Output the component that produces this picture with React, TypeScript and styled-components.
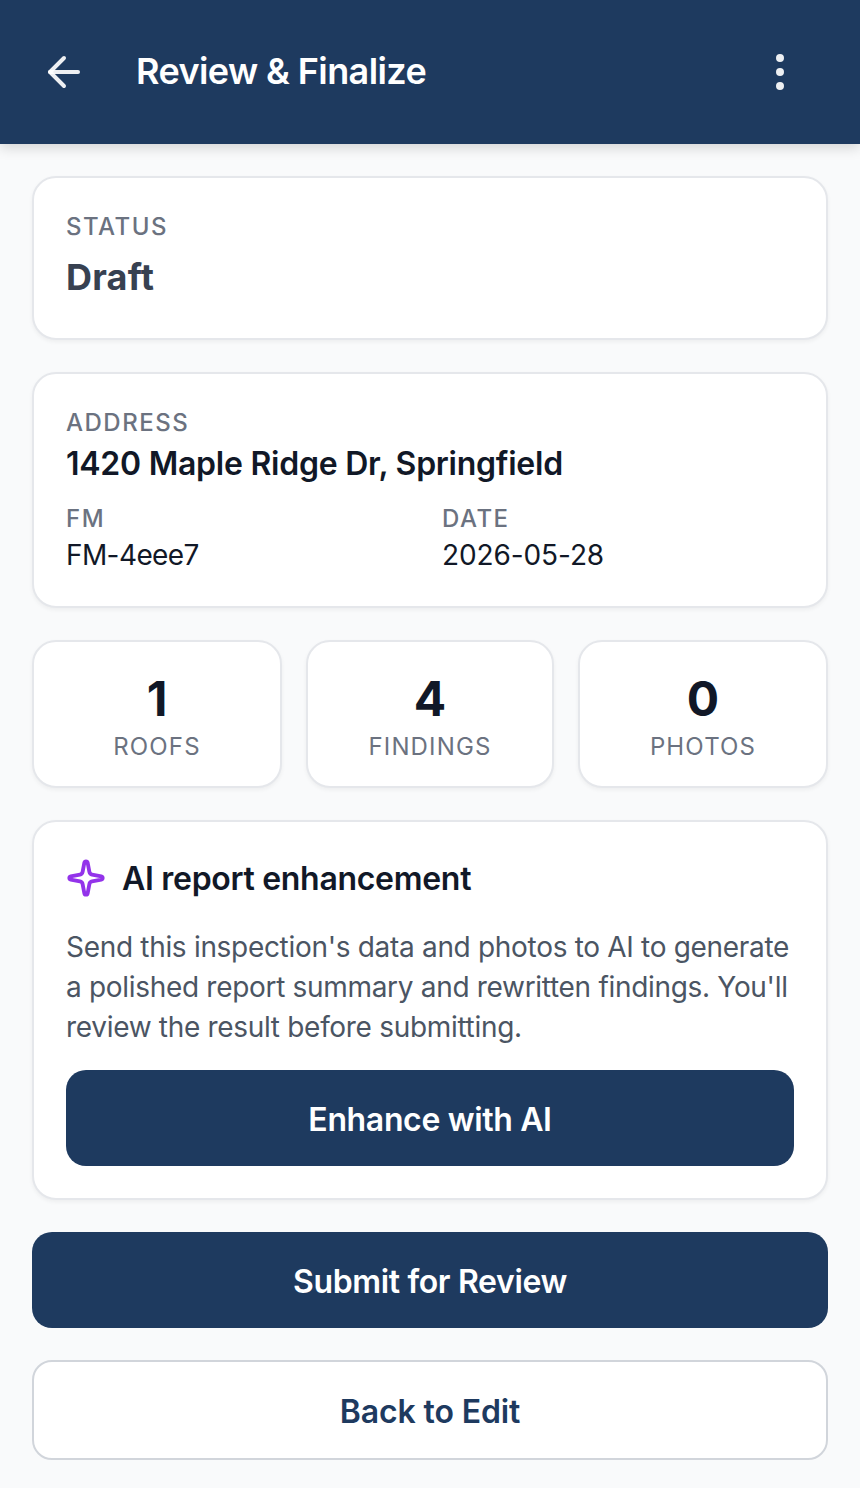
import React from "react";
import styled, { createGlobalStyle } from "styled-components";
import { ArrowLeft, EllipsisVertical, Sparkle } from "lucide-react";

const Global = createGlobalStyle`
  html, body { margin: 0; padding: 0; background: #f9fafb; }
  * { box-sizing: border-box; }
  body { font-family: Inter, "Liberation Sans", sans-serif; }
`;

const Page = styled.div`
  width: 860px;
  height: 1488px;
  overflow: hidden;
  background: #f9fafb;
  display: flex;
  flex-direction: column;
`;

const Header = styled.header`
  height: 144px;
  flex: none;
  background: #1e3a5f;
  color: #fff;
  display: flex;
  align-items: center;
  padding: 0 56px 0 40px;
  gap: 48px;
  box-shadow: 0 4px 12px rgba(0, 0, 0, 0.15);
  position: relative;
  z-index: 1;
`;

const IconButton = styled.span`
  display: flex;
  width: 48px;
  height: 48px;
  flex: none;
  color: rgba(255, 255, 255, 0.92);
`;

const Title = styled.h1`
  flex: 1;
  margin: 0;
  font-size: 36px;
  line-height: 46px;
  padding-bottom: 2px;
  font-weight: 570;
  letter-spacing: -0.6px;
`;

const Content = styled.main`
  display: flex;
  flex-direction: column;
  gap: 32px;
  padding: 32px;
`;

const Card = styled.section`
  background: #fff;
  border: 2px solid #e5e7eb;
  border-radius: 24px;
  padding: 32px;
  box-shadow: 0 2px 4px rgba(0, 0, 0, 0.05);
`;

const Label = styled.div`
  font-size: 24px;
  line-height: 30px;
  padding-top: 2px;
  font-weight: 500;
  letter-spacing: 1.5px;
  color: #6b7280;
`;

const StatusValue = styled.div`
  margin-top: 8px;
  font-size: 36px;
  line-height: 54px;
  padding-bottom: 2px;
  font-weight: 700;
  letter-spacing: 0.2px;
  color: #374151;
`;

const Address = styled.div`
  font-size: 32px;
  line-height: 45px;
  padding-top: 3px;
  font-weight: 570;
  letter-spacing: -0.25px;
  color: #111827;
`;

const MetaGrid = styled.div`
  margin-top: 16px;
  display: grid;
  grid-template-columns: 1fr 1fr;
  gap: 24px;
`;

const MetaValue = styled.div<{ $spacing: number }>`
  font-size: 28px;
  line-height: 38px;
  padding-top: 2px;
  letter-spacing: ${(p) => p.$spacing}px;
  color: #111827;
`;

const Stats = styled.div`
  display: grid;
  grid-template-columns: 250px 248px 250px;
  gap: 24px;
`;

const StatCard = styled(Card)`
  padding: 24px 16px;
  text-align: center;
`;

const StatValue = styled.div`
  font-size: 48px;
  line-height: 62px;
  padding-top: 2px;
  font-weight: 700;
  color: #111827;
`;

const StatLabel = styled.div`
  font-size: 24px;
  line-height: 30px;
  padding-top: 2px;
  letter-spacing: 1.15px;
  color: #6b7280;
`;

const AiHeading = styled.div`
  display: flex;
  align-items: center;
  gap: 16px;
  height: 48px;
  color: #9333ea;
`;

const AiTitle = styled.h2`
  margin: 0;
  font-size: 32px;
  line-height: 46px;
  padding-top: 2px;
  font-weight: 570;
  letter-spacing: -0.3px;
  color: #111827;
`;

const AiText = styled.p`
  margin: 24px 0;
  padding-top: 1px;
  font-size: 28px;
  line-height: 40px;
  height: 120px;
  letter-spacing: -0.31px;
  color: #4b5563;
`;

const Primary = styled.button`
  display: block;
  width: 100%;
  height: 96px;
  padding: 2px 0 0;
  border: 0;
  border-radius: 20px;
  background: #1e3a5f;
  color: #fff;
  font: 570 32px Inter, "Liberation Sans", sans-serif;
  letter-spacing: -0.35px;
`;

const Secondary = styled.button`
  display: block;
  width: 100%;
  height: 100px;
  padding: 2px 0 0;
  border: 2px solid #d1d5db;
  border-radius: 20px;
  background: #fff;
  color: #1e3a5f;
  font: 570 32px Inter, "Liberation Sans", sans-serif;
  letter-spacing: -0.14px;
`;

const stats = [
  ["1", "ROOFS"],
  ["4", "FINDINGS"],
  ["0", "PHOTOS"],
];

export default function App() {
  return (
    <Page>
      <Global />
      <Header>
        <IconButton><ArrowLeft size={48} /></IconButton>
        <Title>Review &amp; Finalize</Title>
        <IconButton><EllipsisVertical size={48} /></IconButton>
      </Header>
      <Content>
        <Card>
          <Label>STATUS</Label>
          <StatusValue>Draft</StatusValue>
        </Card>
        <Card>
          <Label>ADDRESS</Label>
          <Address>1420 Maple Ridge Dr, Springfield</Address>
          <MetaGrid>
            <div>
              <Label>FM</Label>
              <MetaValue $spacing={-0.6}>FM-4eee7</MetaValue>
            </div>
            <div>
              <Label>DATE</Label>
              <MetaValue $spacing={-0.1}>2026-05-28</MetaValue>
            </div>
          </MetaGrid>
        </Card>
        <Stats>
          {stats.map(([value, label]) => (
            <StatCard key={label}>
              <StatValue>{value}</StatValue>
              <StatLabel>{label}</StatLabel>
            </StatCard>
          ))}
        </Stats>
        <Card>
          <AiHeading>
            <Sparkle size={40} strokeWidth={2.3} />
            <AiTitle>AI report enhancement</AiTitle>
          </AiHeading>
          <AiText>
            Send this inspection's data and photos to AI to generate a polished report summary and rewritten findings. You'll review the result before submitting.
          </AiText>
          <Primary>Enhance with AI</Primary>
        </Card>
        <Primary>Submit for Review</Primary>
        <Secondary>Back to Edit</Secondary>
      </Content>
    </Page>
  );
}
